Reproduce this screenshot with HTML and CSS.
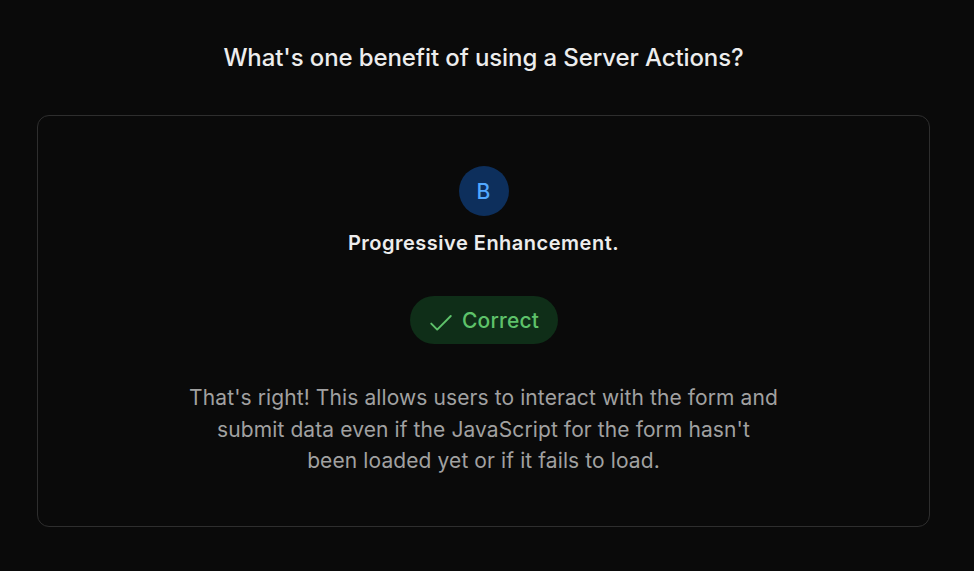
FILE: index.html
```html
<!DOCTYPE html>
<html lang="en">
<head>
<meta charset="utf-8">
<link rel="stylesheet" href="styles.css">
</head>
<body>
<main class="page">
  <h1 class="question">What's one benefit of using a Server Actions?</h1>
  <section class="card">
    <div class="letter">B</div>
    <p class="answer">Progressive Enhancement.</p>
    <div class="badge">
      <svg class="check" width="26" height="26" viewBox="0 0 24 24" fill="none" stroke="currentColor" stroke-width="1.8" stroke-linecap="round" stroke-linejoin="round"><path d="M3 13.5l5.5 5.5L21 6.5"/></svg>
      <span>Correct</span>
    </div>
    <p class="explain">That's right! This allows users to interact with the form and submit data even if the JavaScript for the form hasn't<br>been loaded yet or if it fails to load.</p>
  </section>
</main>
</body>
</html>
```
FILE: styles.css
```css
html, body {
  margin: 0;
  padding: 0;
  background: #0a0a0a;
}
body {
  font-family: Inter, "Noto Sans", "Liberation Sans", sans-serif;
  color: #ededed;
}
.page {
  display: flex;
  flex-direction: column;
  align-items: center;
  padding: 41px 44px 0 37px;
}
.question {
  margin: 0;
  font-size: 24px;
  font-weight: 500;
  line-height: 34px;
  color: #ededed;
  letter-spacing: -0.1px;
}
.card {
  margin-top: 40px;
  align-self: stretch;
  box-sizing: border-box;
  height: 412px;
  border: 1px solid #2e2e2e;
  border-radius: 12px;
  display: flex;
  flex-direction: column;
  align-items: center;
  padding-top: 50px;
}
.letter {
  width: 50px;
  height: 50px;
  border-radius: 50%;
  background: #0d2f5c;
  color: #52a8ff;
  font-size: 21px;
  font-weight: 500;
  display: flex;
  align-items: center;
  justify-content: center;
}
.answer {
  margin: 16px 0 0;
  font-size: 20px;
  font-weight: 600;
  line-height: 22px;
  color: #ededed;
  letter-spacing: 0.5px;
}
.badge {
  margin-top: 42px;
  height: 48px;
  width: 148px;
  box-sizing: border-box;
  border-radius: 24px;
  background: #0f2e18;
  color: #5ec26a;
  display: flex;
  align-items: center;
  justify-content: center;
  gap: 8px;
  font-size: 21px;
  font-weight: 500;
  letter-spacing: 0.2px;
}
.check {
  display: block;
  margin-top: 3px;
}
.explain {
  margin: 38px 0 0;
  width: 640px;
  text-align: center;
  font-size: 21px;
  line-height: 31.5px;
  color: #a1a1a1;
  letter-spacing: 0.1px;
}
```
